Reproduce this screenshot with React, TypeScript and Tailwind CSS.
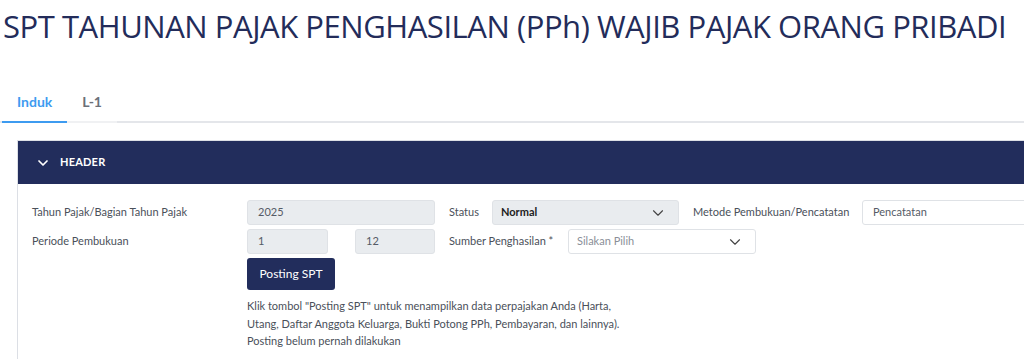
import { ChevronDown } from "lucide-react";

const ui = { fontFamily: "Lato, 'Open Sans', sans-serif" };

const Field = ({
  value,
  width,
  disabled = true,
}: {
  value: string;
  width: string;
  disabled?: boolean;
}) => (
  <div
    className={`${width} shrink-0 h-[25px] flex items-center px-[10px] rounded-[3px] border border-[#dfe2e6] text-[11px] text-[#555b66] ${
      disabled ? "bg-[#e9ecef]" : "bg-white text-[#222]"
    }`}
  >
    {value}
  </div>
);

const Select = ({
  value,
  width,
  filled,
}: {
  value: string;
  width: string;
  filled?: boolean;
}) => (
  <div
    className={`${width} shrink-0 h-[25px] flex items-center justify-between pl-[8px] pr-[11px] rounded-[3px] border border-[#dfe2e6] text-[11px] ${
      filled ? "bg-[#e9ecef] text-[#222] font-bold" : "bg-white text-[#8a8f98]"
    }`}
  >
    <span>{value}</span>
    <ChevronDown size={18} strokeWidth={1.5} className="text-[#444]" />
  </div>
);

export default function App() {
  return (
    <div className="w-[1024px] h-[359px] overflow-hidden bg-white">
      <h1
        className="pl-[3px] pt-[4px] text-[31px] leading-[44px] tracking-[-0.45px] text-[#232c5a] whitespace-nowrap"
        style={{ fontFamily: "'Open Sans', sans-serif" }}
      >
        SPT TAHUNAN PAJAK PENGHASILAN (PPh) WAJIB PAJAK ORANG PRIBADI
      </h1>

      {/* tabs */}
      <div className="mt-[33px] flex pl-[2px] border-b-2 border-[#e4e6ea]" style={ui}>
        <div className="px-[15px] h-[42px] flex items-center text-[14px] font-bold text-[#3d9bf0] border-b-2 border-[#3d9bf0] -mb-[2px]">
          Induk
        </div>
        <div className="px-[15px] h-[42px] flex items-center text-[14px] font-bold text-[#6b7079] border-b-2 border-[#f0f1f3] -mb-[2px]">
          L-1
        </div>
      </div>

      {/* panel */}
      <div className="ml-[17px] mt-[17px] w-[1100px] border border-[#dcdfe5]" style={ui}>
        <div className="h-[43px] bg-[#222d5c] flex items-center pl-[17px] gap-[9px] text-white">
          <ChevronDown size={16} strokeWidth={2.6} />
          <span className="text-[11px] font-bold tracking-[0.2px]">HEADER</span>
        </div>

        <div className="pt-[16px] pl-[14px] pb-[20px] text-[11px] text-[#4a505a]">
          <div className="flex items-center">
            <div className="w-[215px] shrink-0">Tahun Pajak/Bagian Tahun Pajak</div>
            <Field value="2025" width="w-[188px]" />
            <div className="w-[57px] shrink-0 pl-[14px]">Status</div>
            <Select value="Normal" width="w-[187px]" filled />
            <div className="w-[183px] shrink-0 pl-[14px] whitespace-nowrap">Metode Pembukuan/Pencatatan</div>
            <Field value="Pencatatan" width="w-[300px]" disabled={false} />
          </div>

          <div className="flex items-center mt-[4px]">
            <div className="w-[215px] shrink-0">Periode Pembukuan</div>
            <Field value="1" width="w-[81px]" />
            <div className="w-[27px] shrink-0" />
            <Field value="12" width="w-[80px]" />
            <div className="w-[133px] shrink-0 pl-[14px] whitespace-nowrap">Sumber Penghasilan *</div>
            <Select value="Silakan Pilih" width="w-[188px]" />
          </div>

          <div className="pl-[215px] mt-[4px]">
            <button className="h-[32px] w-[88px] rounded-[3px] bg-[#222d5c] text-white text-[12px]">
              Posting SPT
            </button>
            <p className="mt-[7px] leading-[17.5px] text-[11px] text-[#4a505a]">
              Klik tombol "Posting SPT" untuk menampilkan data perpajakan Anda (Harta,
              <br />
              Utang, Daftar Anggota Keluarga, Bukti Potong PPh, Pembayaran, dan lainnya).
              <br />
              Posting belum pernah dilakukan
            </p>
          </div>
        </div>
      </div>
    </div>
  );
}
